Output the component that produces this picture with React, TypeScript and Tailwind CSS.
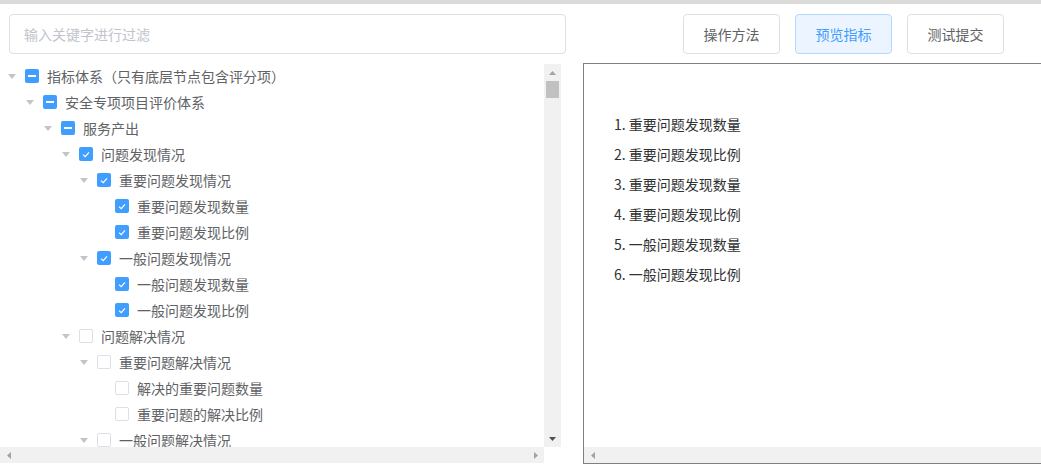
import React from 'react';

type Check = 'checked' | 'half' | 'none';

interface Node {
  level: number;
  label: string;
  state: Check;
  leaf?: boolean;
}

const TREE: Node[] = [
  { level: 0, label: '指标体系（只有底层节点包含评分项）', state: 'half' },
  { level: 1, label: '安全专项项目评价体系', state: 'half' },
  { level: 2, label: '服务产出', state: 'half' },
  { level: 3, label: '问题发现情况', state: 'checked' },
  { level: 4, label: '重要问题发现情况', state: 'checked' },
  { level: 5, label: '重要问题发现数量', state: 'checked', leaf: true },
  { level: 5, label: '重要问题发现比例', state: 'checked', leaf: true },
  { level: 4, label: '一般问题发现情况', state: 'checked' },
  { level: 5, label: '一般问题发现数量', state: 'checked', leaf: true },
  { level: 5, label: '一般问题发现比例', state: 'checked', leaf: true },
  { level: 3, label: '问题解决情况', state: 'none' },
  { level: 4, label: '重要问题解决情况', state: 'none' },
  { level: 5, label: '解决的重要问题数量', state: 'none', leaf: true },
  { level: 5, label: '重要问题的解决比例', state: 'none', leaf: true },
  { level: 4, label: '一般问题解决情况', state: 'none' },
];

const PREVIEW = [
  '重要问题发现数量',
  '重要问题发现比例',
  '重要问题发现数量',
  '重要问题发现比例',
  '一般问题发现数量',
  '一般问题发现比例',
];

const INDENT = ['pl-0', 'pl-[18px]', 'pl-[36px]', 'pl-[54px]', 'pl-[72px]', 'pl-[90px]'];

const FONT = "font-['Microsoft_YaHei','Noto_Sans_CJK_SC',sans-serif]";

// keep full-width brackets a whole em wide
function Label({ text }: { text: string }) {
  const parts = text.split(/([（）])/).filter(Boolean);
  return (
    <span className="text-[14px] text-[#606266] whitespace-nowrap">
      {parts.map((p, i) =>
        p === '（' ? (
          <span key={i} className="inline-block w-[14px] text-right">（</span>
        ) : p === '）' ? (
          <span key={i} className="inline-block w-[14px] text-left">）</span>
        ) : (
          <React.Fragment key={i}>{p}</React.Fragment>
        ),
      )}
    </span>
  );
}

function Caret({ hidden }: { hidden?: boolean }) {
  return (
    <span className="w-6 h-[26px] flex items-center justify-center shrink-0">
      {!hidden && (
        <svg width="8" height="5" viewBox="0 0 8 5">
          <path d="M0 0 L8 0 L4 5 Z" fill="#c0c4cc" />
        </svg>
      )}
    </span>
  );
}

function Box({ state }: { state: Check }) {
  if (state === 'none') {
    return <span className="w-[14px] h-[14px] ml-px mr-2 shrink-0 rounded-[2px] border border-[#dcdfe6] bg-white" />;
  }
  return (
    <span className="w-[14px] h-[14px] ml-px mr-2 shrink-0 rounded-[2px] bg-[#409eff] flex items-center justify-center">
      {state === 'half' ? (
        <span className="w-[8px] h-[2px] bg-white" />
      ) : (
        <svg width="8" height="7" viewBox="0 0 8 7">
          <path d="M1 3.6 L3.2 5.6 L7 1.4" fill="none" stroke="#fff" strokeWidth="1.2" />
        </svg>
      )}
    </span>
  );
}

function Arrow({ dir, color = '#a3a3a3' }: { dir: 'up' | 'down' | 'left' | 'right'; color?: string }) {
  const d = {
    up: 'M0 4 L7 4 L3.5 0 Z',
    down: 'M0 0 L7 0 L3.5 4 Z',
    left: 'M4 0 L4 7 L0 3.5 Z',
    right: 'M0 0 L0 7 L4 3.5 Z',
  }[dir];
  const vert = dir === 'up' || dir === 'down';
  return (
    <svg width={vert ? 7 : 4} height={vert ? 4 : 7} viewBox={vert ? '0 0 7 4' : '0 0 4 7'}>
      <path d={d} fill={color} />
    </svg>
  );
}

export default function App() {
  return (
    <div className={`w-[1041px] h-[468px] overflow-hidden bg-white ${FONT}`}>
      {/* top strip */}
      <div className="h-1 bg-[#dadada]" />

      {/* ── toolbar ───────────────────────────────────── */}
      <div className="flex items-center pt-[10px]">
        <div className="ml-[9px] w-[557px] h-10 rounded-[4px] border border-[#dcdfe6] flex items-center px-[14px] text-[14px] text-[#c0c4cc]">
          输入关键字进行过滤
        </div>
        <div className="ml-[117px] flex gap-[15px]">
          <button className="w-[97px] h-10 rounded-[4px] border border-[#dcdfe6] bg-white text-[14px] text-[#606266]">
            操作方法
          </button>
          <button className="w-[97px] h-10 rounded-[4px] border border-[#b3d8ff] bg-[#ecf5ff] text-[14px] text-[#409eff]">
            预览指标
          </button>
          <button className="w-[97px] h-10 rounded-[4px] border border-[#dcdfe6] bg-white text-[14px] text-[#606266]">
            测试提交
          </button>
        </div>
      </div>

      {/* ── body ──────────────────────────────────────── */}
      <div className="flex items-start mt-[10px]">
        {/* tree */}
        <div className="w-[561px] h-[399px] flex flex-col shrink-0">
          <div className="flex h-[383px]">
            <div className="flex-1 overflow-hidden">
              <div className="-mt-px">
                {TREE.map((n, i) => (
                  <div key={i} className={`flex items-center h-[26px] ${INDENT[n.level]}`}>
                    <Caret hidden={n.leaf} />
                    <Box state={n.state} />
                    <Label text={n.label} />
                  </div>
                ))}
              </div>
            </div>
            <div className="w-[17px] bg-[#f1f1f1] flex flex-col">
              <div className="h-[17px] flex items-center justify-center">
                <Arrow dir="up" />
              </div>
              <div className="mx-[2px] h-[17px] bg-[#c1c1c1]" />
              <div className="flex-1" />
              <div className="h-[17px] flex items-center justify-center">
                <Arrow dir="down" color="#505050" />
              </div>
            </div>
          </div>
          <div className="flex h-4">
            <div className="flex-1 bg-[#f1f1f1] flex items-center justify-between">
              <span className="w-[17px] flex justify-center">
                <Arrow dir="left" />
              </span>
              <span className="w-[17px] flex justify-center">
                <Arrow dir="right" />
              </span>
            </div>
            <div className="w-[17px] bg-white" />
          </div>
        </div>

        {/* preview */}
        <div className="ml-[22px] -mt-px w-[480px] h-[401px] shrink-0 border border-[#808080] flex flex-col">
          <div className="flex-1 pt-[45px] pl-[30px]">
            {PREVIEW.map((t, i) => (
              <div key={i} className="h-[30px] flex items-center text-[14px] text-[#303133] whitespace-nowrap">
                {i + 1}. {t}
              </div>
            ))}
          </div>
          <div className="h-[16px] bg-[#f1f1f1] flex items-center">
            <span className="w-[17px] flex justify-center">
              <Arrow dir="left" />
            </span>
          </div>
        </div>
      </div>
    </div>
  );
}
